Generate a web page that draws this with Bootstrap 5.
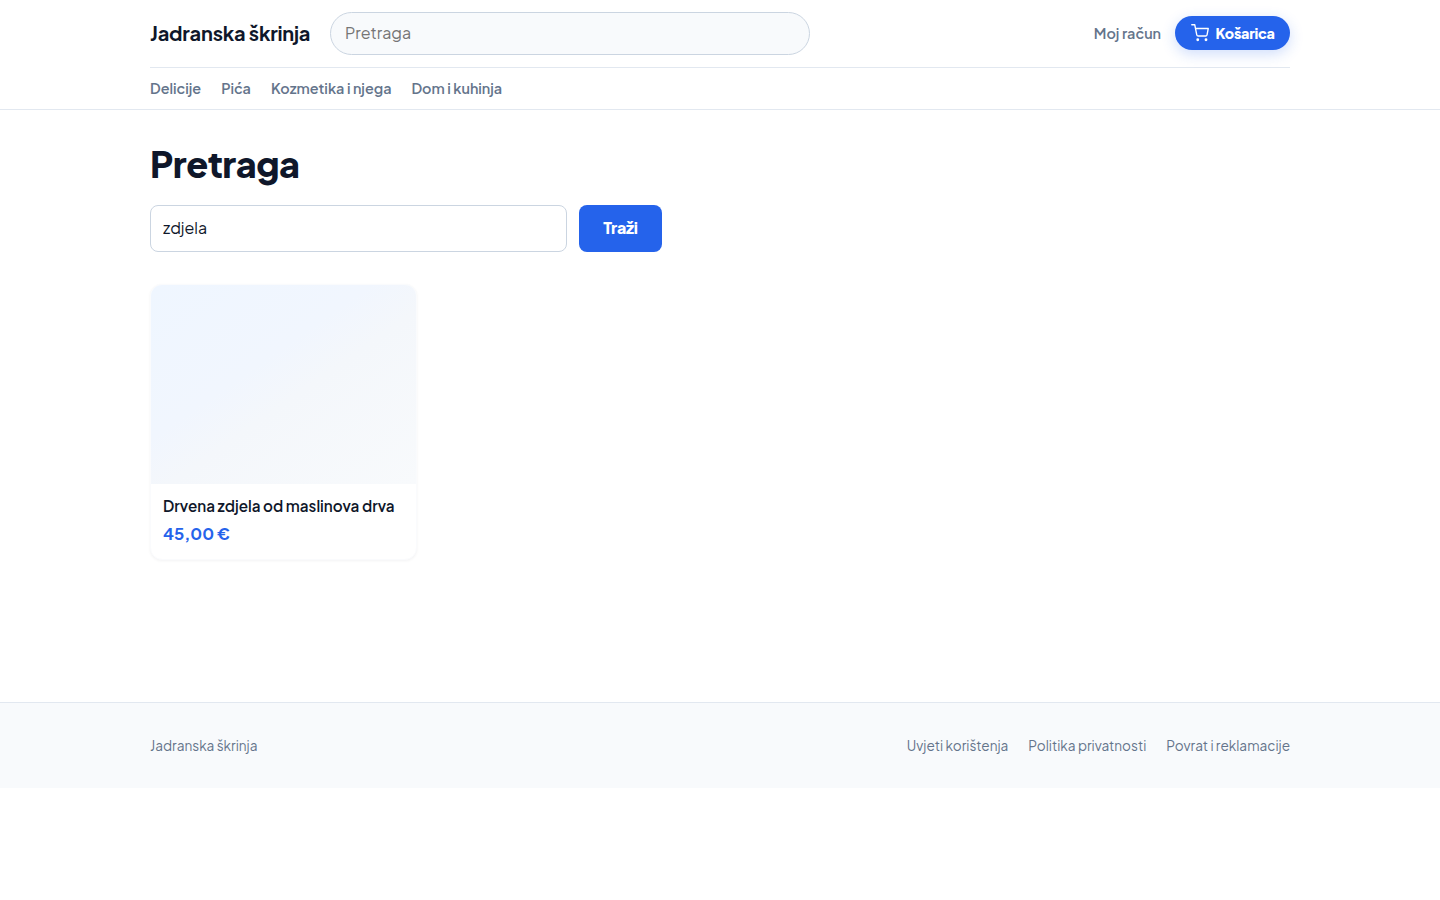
<!DOCTYPE html>
<html lang="hr">
<head>
<meta charset="utf-8">
<meta name="viewport" content="width=device-width, initial-scale=1">
<title>Pretraga – Jadranska škrinja</title>
<link href="https://cdn.jsdelivr.net/npm/bootstrap@5.3.0/dist/css/bootstrap.min.css" rel="stylesheet">
<style>
body{font-family:"Plus Jakarta Sans",Inter,sans-serif;color:#0f172a;background:#fff;line-height:1.5}
a{text-decoration:none}
.shell{width:1140px;margin:0 auto}
.site-head{height:110px;border-bottom:1px solid #e2e8f0}
.head-top{height:68px;border-bottom:1px solid #e2e8f0}
.brand{font-size:20px;font-weight:700;color:#0f172a;letter-spacing:-.2px;width:160px;white-space:nowrap;padding-bottom:2px}
.head-search{width:480px;height:43px;border:1px solid #cbd5e1;border-radius:22px;background:#f8fafc;padding:0 14px 2px;font-size:16px;margin-left:20px}
.head-search::placeholder{color:#757575;opacity:1}
.muted-link{color:#64748b;font-size:14.4px;font-weight:600;white-space:nowrap}
.account{margin-right:14px}
.cart-btn{width:115px;height:34px;border-radius:17px;background:#2563eb;color:#fff;font-size:14.4px;font-weight:800;letter-spacing:-.27px;padding-left:16px;gap:6.5px;margin-bottom:2px;box-shadow:0 4px 14px rgba(37,99,235,.22)}
.cart-btn span{padding-top:2px}
.head-nav{height:41px;gap:20px}
.page-title{font-size:36px;font-weight:800;line-height:46px;letter-spacing:-.52px;margin:31px 0 18px}
.find-input{width:417px;height:47px;border:1px solid #cbd5e1;border-radius:8px;padding:0 12px 2px;font-size:16px;color:#0f172a;background:#fff}
.find-btn{width:83px;height:47px;border:0;border-radius:8px;background:#2563eb;color:#fff;font-size:16px;font-weight:800;letter-spacing:-.2px;padding:0 0 2px}
.product{width:267px;height:276px;border:1px solid #fafbfd;border-radius:12px;box-shadow:0 1px 3px rgba(15,23,42,.05);overflow:hidden;margin-top:32px;background:#fff}
.product-pic{height:199px;background:linear-gradient(145deg,#eff6ff 0%,#f1f6fe 40%,#f4f7fb 55%,#f8fafc 100%)}
.product-name{font-size:15.2px;font-weight:600;line-height:20px;color:#0f172a;white-space:nowrap}
.product-price{font-size:16.8px;font-weight:700;line-height:26px;color:#2563eb;margin-top:5px}
.site-foot{margin-top:142px;height:86px;background:#f8fafc;border-top:1px solid #e2e8f0}
.site-foot,.site-foot a{font-size:13.6px;color:#64748b;white-space:nowrap}
.foot-row{padding-top:2px}
.foot-links{gap:20px}
</style>
</head>
<body>
<header class="site-head">
  <div class="shell">
    <div class="head-top d-flex align-items-center">
      <a class="brand" href="#">Jadranska škrinja</a>
      <input class="head-search" type="search" placeholder="Pretraga" aria-label="Pretraga">
      <a class="muted-link account ms-auto" href="#">Moj račun</a>
      <a class="cart-btn d-flex align-items-center" href="#">
        <svg width="18" height="18" viewBox="0 0 24 24" fill="none" stroke="currentColor" stroke-width="1.8" stroke-linecap="round" stroke-linejoin="round" aria-hidden="true"><path d="M1 1h4l2.7 13.4a2 2 0 0 0 2 1.6h9.7a2 2 0 0 0 2-1.6L23 6H6"/><circle cx="9" cy="21" r="1"/><circle cx="20" cy="21" r="1"/></svg>
        <span>Košarica</span>
      </a>
    </div>
    <nav class="head-nav d-flex align-items-center">
      <a class="muted-link" href="#">Delicije</a>
      <a class="muted-link" href="#">Pića</a>
      <a class="muted-link" href="#">Kozmetika i njega</a>
      <a class="muted-link" href="#">Dom i kuhinja</a>
    </nav>
  </div>
</header>
<main class="shell">
  <h1 class="page-title">Pretraga</h1>
  <form class="d-flex" style="gap:12px">
    <input class="find-input" type="text" value="zdjela" aria-label="Pojam">
    <button class="find-btn" type="button">Traži</button>
  </form>
  <article class="product">
    <div class="product-pic"></div>
    <div class="px-2 ms-1 pt-2 mt-1">
      <div class="product-name">Drvena zdjela od maslinova drva</div>
      <div class="product-price">45,00 €</div>
    </div>
  </article>
</main>
<footer class="site-foot">
  <div class="shell foot-row h-100 d-flex align-items-center justify-content-between">
    <span>Jadranska škrinja</span>
    <nav class="foot-links d-flex">
      <a href="#">Uvjeti korištenja</a>
      <a href="#">Politika privatnosti</a>
      <a href="#">Povrat i reklamacije</a>
    </nav>
  </div>
</footer>
<script src="https://cdn.jsdelivr.net/npm/bootstrap@5.3.0/dist/js/bootstrap.bundle.min.js"></script>
</body>
</html>
